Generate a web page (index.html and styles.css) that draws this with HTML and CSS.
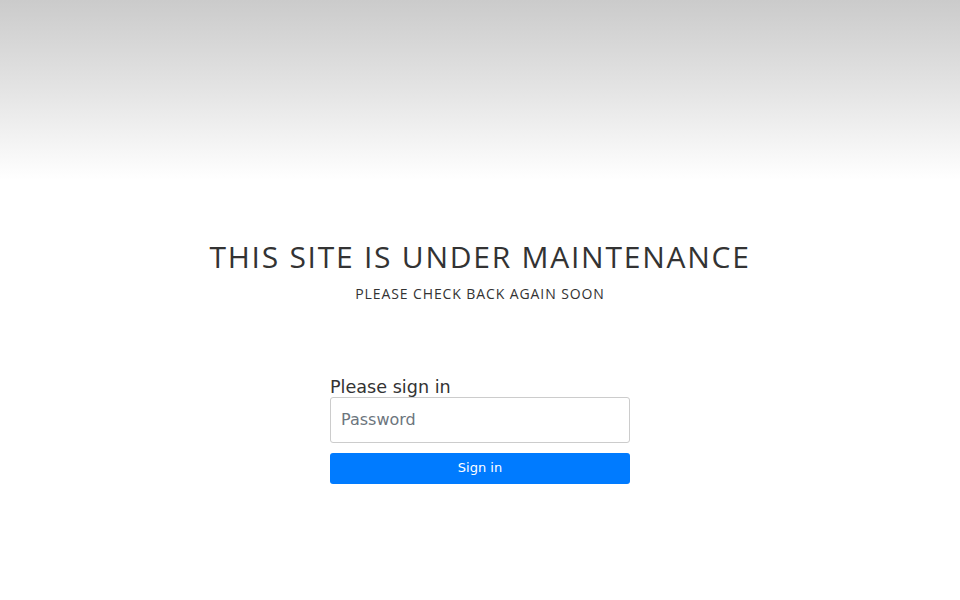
FILE: index.html
```html
<!DOCTYPE html>
<html>
<head>
<meta charset="utf-8">
<link rel="stylesheet" href="styles.css">
</head>
<body>
<div class="top"></div>
<main class="content">
  <h1 class="title">THIS SITE IS UNDER MAINTENANCE</h1>
  <p class="subtitle">PLEASE CHECK BACK AGAIN SOON</p>
  <form class="signin">
    <h2 class="signin-label">Please sign in</h2>
    <input class="field" type="password" placeholder="Password">
    <button class="btn" type="button">Sign in</button>
  </form>
</main>
</body>
</html>
```
FILE: styles.css
```css
html, body {
  margin: 0;
  padding: 0;
  background: #fff;
  font-family: "DejaVu Sans", sans-serif;
  color: #333;
}
.top {
  height: 180px;
  background: linear-gradient(to bottom, #cbcbcb 0%, #e4e4e4 50%, #ffffff 100%);
}
.content {
  display: flex;
  flex-direction: column;
  align-items: center;
  padding-top: 57px;
}
.title {
  margin: 0;
  font-family: "Open Sans", sans-serif;
  font-weight: 400;
  font-size: 30px;
  line-height: 40px;
  letter-spacing: 1.75px;
  color: #333;
}
.subtitle {
  margin: 5px 0 0;
  font-family: "Open Sans", sans-serif;
  font-size: 14px;
  line-height: 24px;
  letter-spacing: 0.9px;
  color: #333;
}
.signin {
  margin-top: 71px;
  width: 300px;
  display: flex;
  flex-direction: column;
}
.signin-label {
  margin: 0;
  font-size: 17.6px;
  font-weight: 400;
  line-height: 20px;
  color: #333;
}
.field {
  box-sizing: border-box;
  height: 46px;
  margin-top: 0;
  padding: 0 10px 2px;
  border: 1px solid #ccc;
  border-radius: 3px;
  font-family: "DejaVu Sans", sans-serif;
  font-size: 16px;
  color: #495057;
}
.field::placeholder { color: #6c757d; }
.btn {
  margin-top: 10px;
  height: 31px;
  padding: 0 0 2px;
  border: 0;
  border-radius: 3px;
  background: #007bff;
  color: #fff;
  font-family: "DejaVu Sans", sans-serif;
  font-size: 13px;
}
```
